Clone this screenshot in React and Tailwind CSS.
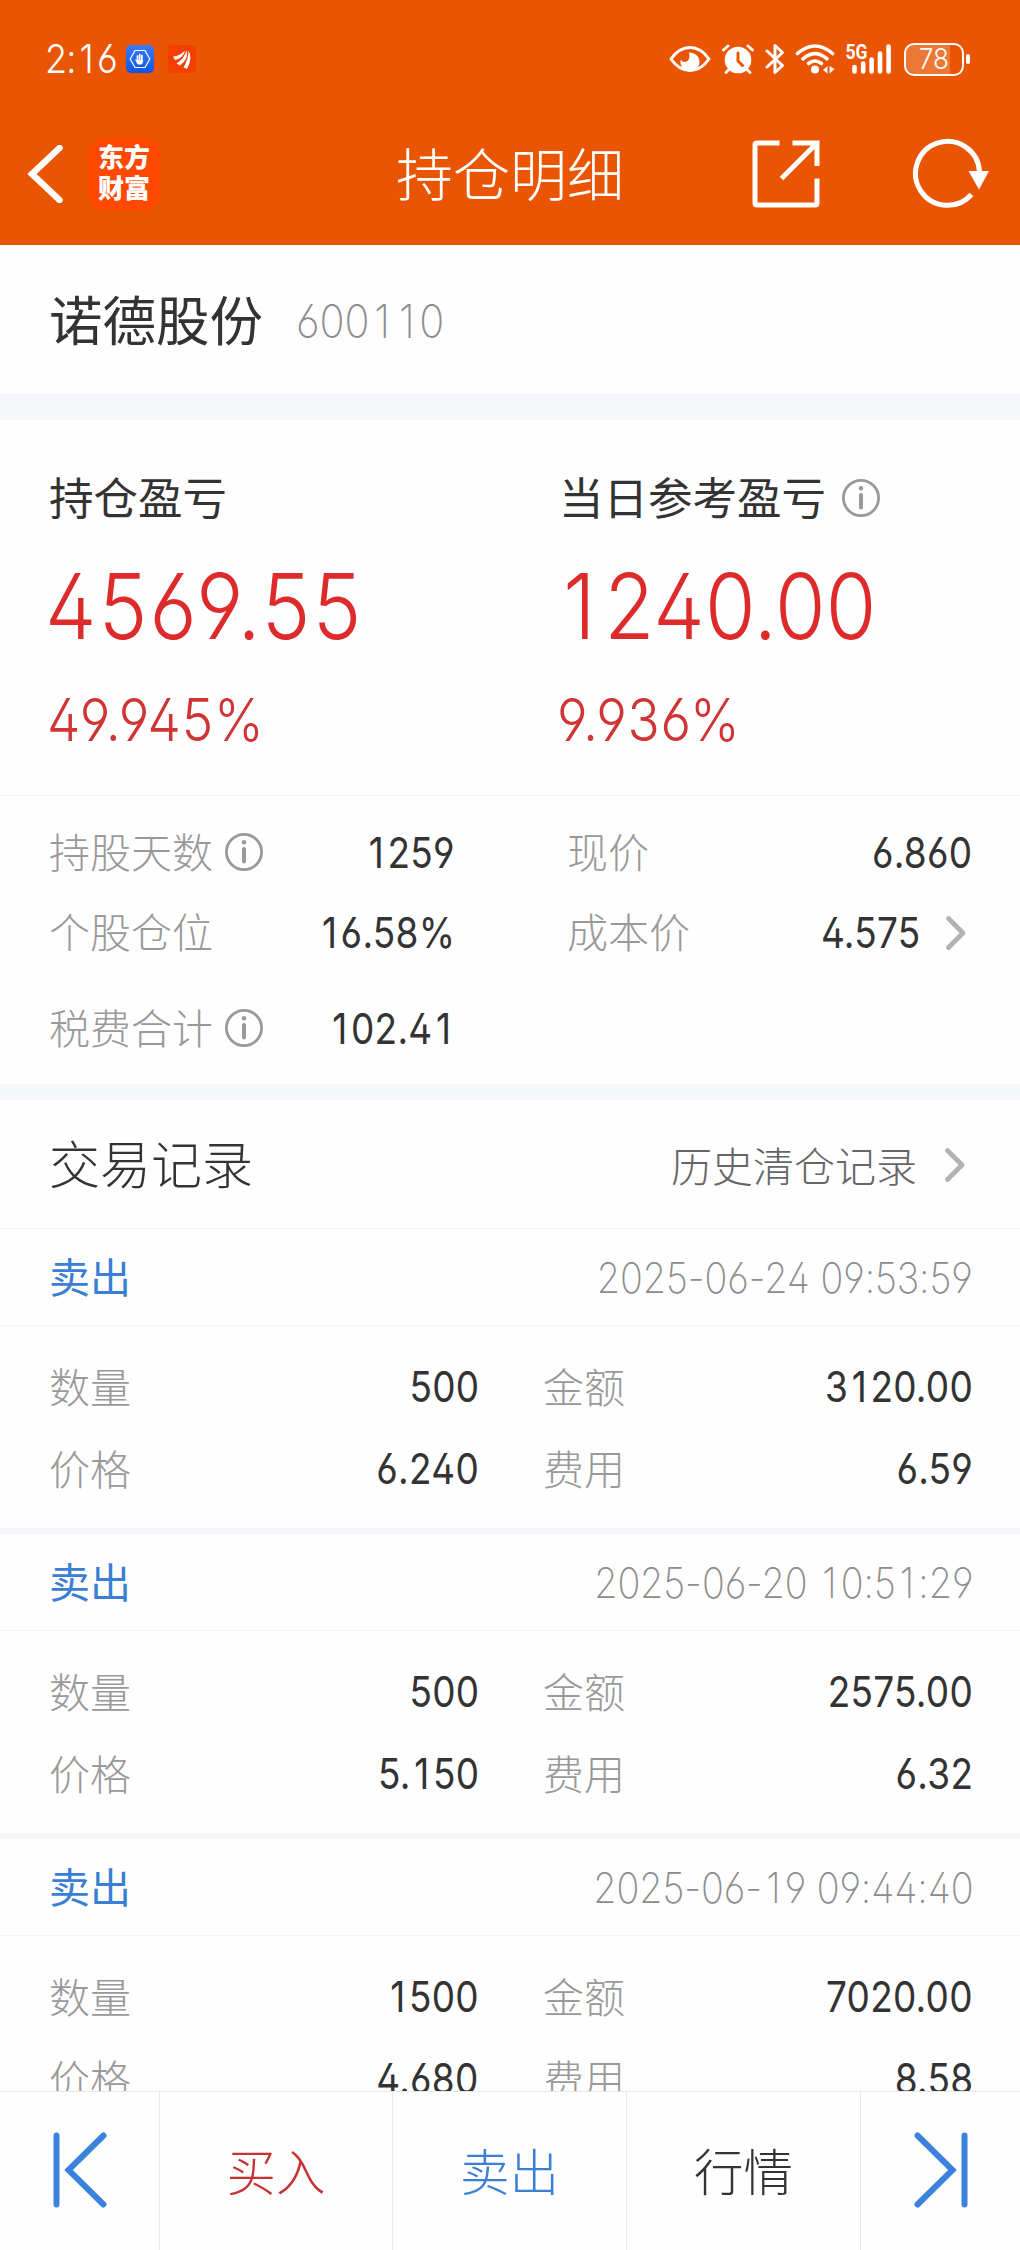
import clsx from "clsx";

const records = [
  { id: 1, type: "卖出", time: "2025-06-24 09:53:59", quantity: "500", amount: "3120.00", price: "6.240", fee: "6.59" },
  { id: 2, type: "卖出", time: "2025-06-20 10:51:29", quantity: "500", amount: "2575.00", price: "5.150", fee: "6.32" },
  { id: 3, type: "卖出", time: "2025-06-19 09:44:40", quantity: "1500", amount: "7020.00", price: "4.680", fee: "8.58" },
];

// Narrow digits with open 4, 6 and 9; the slim "1" gets a full digit cell
const Num = ({ children, thin, className }) => (
  <span
    className={clsx(
      "block whitespace-pre font-['Inter',sans-serif] [font-feature-settings:'cv02','cv03','cv04']",
      thin ? "scale-x-[0.9]" : "scale-x-[0.87]",
      className
    )}
  >
    {children.split(/(1)/).map((part, i) =>
      part === "1" ? (
        <span key={i} className="inline-block w-[0.6em] text-center">{part}</span>
      ) : (
        part
      )
    )}
  </span>
);

const InfoIcon = () => (
  <svg className="size-[38px] shrink-0" viewBox="0 0 38 38" fill="none">
    <circle cx="19" cy="19" r="17.6" stroke="#999999" strokeWidth="2.8" />
    <circle cx="19" cy="9.2" r="2.2" fill="#999999" />
    <path d="M19 16v12.5" stroke="#999999" strokeWidth="4" strokeLinecap="round" />
  </svg>
);

const ChevronIcon = () => (
  <svg className="mt-[2px] h-[36px] w-[22px] shrink-0" viewBox="0 0 22 36" fill="none">
    <path d="M3.500 3.5 18 18 3.500 32.5" stroke="#b2b2b2" strokeWidth="4.8" strokeLinecap="round" strokeLinejoin="round" />
  </svg>
);

const StatusBar = () => (
  <div className="flex h-[102px] items-center justify-between pt-4 pr-[50px] pl-[45px]">
    <div className="flex items-center">
      <div className="flex w-[81px]">
        <Num thin className="origin-left text-[40px] leading-[44px] font-light tracking-[-1px]">2:16</Num>
      </div>
      <svg className="size-7" viewBox="0 0 28 28">
        <defs>
          <linearGradient id="shield" x1="0" y1="0" x2="0" y2="1">
            <stop offset="0" stopColor="#3a7bfa" />
            <stop offset="1" stopColor="#0f55e6" />
          </linearGradient>
        </defs>
        <rect width="28" height="28" rx="5" fill="url(#shield)" />
        <path d="M9 5.5h10l4.8 8.500-4.800 8.500H9L4.200 14z" fill="none" stroke="#fff" strokeWidth="1.2" />
        <path d="M11.500 11v5M13.700 9.500v7M15.900 10.500v6" stroke="#fff" strokeWidth="1.700" strokeLinecap="round" />
        <path d="M9 14.200l2 1h5.700v2.300q0 2-2.200 2h-1.500q-1.500 0-2.300-1.600z" fill="#fff" />
      </svg>
      <svg className="ml-[14px] size-7" viewBox="0 0 28 28">
        <rect width="28" height="28" rx="4" fill="#f43e02" />
        <path d="M5 11.500Q12 11 17 5.500 15.500 13 7 15z" fill="#fff" />
        <path d="M8.500 18.500Q16 14 18.500 5.200 21.500 13 12 20.500z" fill="#fff" />
        <path d="M15.500 22.500Q20.500 14 20.500 5.500 25 13 19 24z" fill="#fff" />
      </svg>
    </div>

    <div className="flex items-center">
      <svg className="h-[28px] w-[42px]" viewBox="0 0 42 28" fill="none">
        <path d="M2 14Q10 2.500 21 2.500T40 14Q32 25.500 21 25.500T2 14z" stroke="#fff" strokeWidth="3" strokeLinejoin="round" />
        <path d="M20 7.500A9.500 9.500 0 1 1 11.800 14.500Q13 17 15.800 17 19.500 16.600 20.300 13 20.600 10 20 7.500z" fill="#fff" />
      </svg>
      <svg className="ml-[11px] h-[30px] w-8" viewBox="0 0 32 30" fill="none" stroke="#fff" strokeLinecap="round">
        <circle cx="16" cy="16" r="13.300" fill="#fff" stroke="none" />
        <path d="M1.500 6 6 2M30.500 6 26 2M7 25.500 4 28.500M25 25.500 28 28.500" strokeWidth="2.800" />
        <path d="M16 9v8l4.500 4.500" stroke="#e95502" strokeWidth="3" strokeLinejoin="round" />
      </svg>
      <svg className="ml-[11px] h-[32px] w-5" viewBox="0 0 20 32" fill="none" stroke="#fff" strokeWidth="3" strokeLinecap="round" strokeLinejoin="round">
        <path d="M2 8 17.500 22.500 10 29.500V2.500L17.500 9.500 2 24" />
      </svg>
      <svg className="ml-[10px] h-[30px] w-10" viewBox="0 0 40 30" fill="none" stroke="#fff" strokeWidth="3.600" strokeLinecap="round">
        <path d="M2.500 9.500Q20-5.500 37.500 9.500" />
        <path d="M8 14.800Q20 4.500 32 14.800" />
        <path d="M13.500 19.500Q20 14.500 26.500 19.500" />
        <circle cx="20" cy="25.500" r="4" fill="#fff" stroke="none" />
        <path d="M32.500 22v7.500L28 26zM34.500 22v7.500L39.500 25z" fill="#fff" stroke="none" />
      </svg>
      <svg className="ml-[11px] h-[30px] w-[46px] overflow-visible" viewBox="0 0 46 30" fill="none" stroke="#fff" strokeWidth="4.600" strokeLinecap="round">
        <text x="-0.500" y="14.500" fill="#fff" stroke="none" fontSize="19.500" fontWeight="700" textLength="22" lengthAdjust="spacingAndGlyphs" fontFamily="Roboto, sans-serif">5G</text>
        <path d="M8.500 23v4.500M17.200 19.500v8M25.600 15.500v12M34 9.500v18M42.600 2.500v25" />
      </svg>
      <div className="relative ml-[12px] flex h-[33px] w-[60px] items-center justify-center rounded-[10px] border-[2.5px] border-white">
        <span className="absolute inset-y-0 left-0 w-[44px] rounded-l-[7px] bg-white/20" />
        <Num thin className="relative text-[29px] leading-[28px] font-light">78</Num>
      </div>
      <span className="ml-[2px] h-[10px] w-1 rounded-full bg-white" />
    </div>
  </div>
);

const NavBar = () => (
  <div className="grid h-[143px] grid-cols-[1fr_auto_1fr] items-center">
    <div className="flex items-center pl-[27px]">
      <svg className="h-[58px] w-[36px]" viewBox="0 0 36 58" fill="none">
        <path d="M32.500 3 5 29 32.500 55" stroke="#fff" strokeWidth="6.500" strokeLinecap="round" />
      </svg>
      <div className="ml-[25px] flex size-[72px] flex-col items-center justify-center rounded-[16px] bg-[#ff4800] pb-[6px] text-[26px] leading-[31px] font-black">
        <span>东方</span>
        <span>财富</span>
      </div>
    </div>
    <h1 className="pb-[5px] text-[57px] leading-[70px] font-light">持仓明细</h1>
    <div className="flex items-center justify-end pr-[31px]">
      <svg className="size-[68px]" viewBox="0 0 68 68" fill="none" stroke="#fff" strokeWidth="5">
        <path d="M27.500 3H5Q3 3 3 5v58q0 2 2 2h58q2 0 2-2V38.500" />
        <path d="M40.500 3H65v23M64 4 29.500 38.500" />
      </svg>
      <svg className="ml-[91px] size-[78px]" viewBox="0 0 78 78" fill="none">
        <path d="M60.500 59.500A32 32 0 1 1 68.500 37" stroke="#fff" strokeWidth="5" />
        <path d="M57.500 36h20.500L68 54.500z" fill="#fff" />
      </svg>
    </div>
  </div>
);

const ProfitCard = ({ title, value, percent, info, className }) => (
  <div className="w-[510px] shrink-0">
    <div className="flex h-[64px] items-center gap-4">
      <span className="text-[44.500px] leading-[60px] text-[#333333]">{title}</span>
      {info && <span className="pt-1"><InfoIcon /></span>}
    </div>
    <p className={clsx("mt-[23px] -ml-1 flex h-[110px] text-[91px] leading-[110px] font-light text-[#dd2b2b]", className)}>
      <Num thin className="origin-left">{value}</Num>
    </p>
    <p className="mt-[21px] -ml-[2px] flex h-[76px] text-[59px] leading-[76px] font-light tracking-[0.9px] text-[#d03434]">
      <Num thin className="origin-left">{percent}</Num>
    </p>
  </div>
);

const Stat = ({ label, value, info, arrow }) => (
  <div className="flex h-20 items-center">
    <span className="pb-[4px] text-[41px] leading-[56px] font-light text-[#999999]">{label}</span>
    {info && <span className="ml-[12px]"><InfoIcon /></span>}
    <Num className="ml-auto origin-right pt-[2px] text-[42.500px] leading-[56px] tracking-[0.3px] text-[#333333]">{value}</Num>
    {arrow && <span className="mr-[5px] ml-[25px]"><ChevronIcon /></span>}
  </div>
);

const RecordField = ({ label, value }) => (
  <div className="flex h-[82px] items-center justify-between">
    <span className="pb-[4px] text-[41px] leading-[56px] font-light text-[#999999]">{label}</span>
    <Num className="-mr-[2px] origin-right text-[42.500px] leading-[56px] tracking-[0.3px] text-[#333333]">{value}</Num>
  </div>
);

const Record = ({ record }) => (
  <li className="border-b-[6px] border-[#f6f7fa]">
    <div className="flex h-[97px] items-center justify-between border-b border-[#f4f4f4] px-[49px]">
      <span className="pb-[4px] text-[41px] leading-[56px] text-[#3b7fd4]">{record.type}</span>
      <time className="-mr-[2px] flex pt-[2px] text-[42px] leading-[56px] font-extralight tracking-[-0.1px] text-[#8c8c8c]">
        <Num thin className="origin-right">{record.time}</Num>
      </time>
    </div>
    <div className="grid grid-cols-2 gap-x-[66px] px-[49px] pt-5 pb-[18px]">
      <RecordField label="数量" value={record.quantity} />
      <RecordField label="金额" value={record.amount} />
      <RecordField label="价格" value={record.price} />
      <RecordField label="费用" value={record.fee} />
    </div>
  </li>
);

const FooterButton = ({ children, className }) => (
  <button className={clsx("flex items-center justify-center border-r border-[#e8e8e8] pb-[3px] text-[49.500px] leading-[60px] font-light", className)}>
    {children}
  </button>
);

const App = () => {
  return (
    <div className="flex h-[2250px] w-[1020px] flex-col overflow-hidden bg-[#fefefe] font-['Noto_Sans_CJK_SC',sans-serif]">
      <header className="h-[245px] shrink-0 bg-[#e95502] text-white">
        <StatusBar />
        <NavBar />
      </header>

      <main className="min-h-0 flex-1 overflow-hidden">
        <section className="flex h-[149px] items-center px-[49px]">
          <h2 className="pb-[4px] text-[53.500px] leading-[70px] text-[#333333]">诺德股份</h2>
          <Num thin className="ml-[33px] origin-left pt-[2px] text-[46px] leading-[60px] font-extralight text-[#8c8c8c]">600110</Num>
        </section>
        <div className="h-[26px] bg-[#f6f7fa]" />

        {/* 盈亏 */}
        <section className="flex h-[376px] border-b border-[#f4f4f4] pt-[44px] pl-[49px]">
          <ProfitCard title="持仓盈亏" value="4569.55" percent="49.945%" className="tracking-[2.5px]" />
          <ProfitCard title="当日参考盈亏" value="1240.00" percent="9.936%" info className="tracking-[0.2px]" />
        </section>

        {/* 持仓数据 */}
        <section className="grid grid-cols-[406px_405px] gap-x-[112px] px-[49px] py-4">
          <Stat label="持股天数" value="1259" info />
          <Stat label="现价" value="6.860" />
          <Stat label="个股仓位" value="16.58%" />
          <Stat label="成本价" value="4.575" arrow />
          <div className="mt-4">
            <Stat label="税费合计" value="102.41" info />
          </div>
        </section>
        <div className="h-4 bg-[#f6f7fa]" />

        {/* 交易记录 */}
        <section>
          <div className="flex h-[129px] items-center justify-between border-b border-[#f4f4f4] pr-[54px] pl-[49px]">
            <h3 className="pb-[4px] text-[51px] leading-[70px] font-light text-[#333333]">交易记录</h3>
            <div className="flex items-center gap-[27px]">
              <span className="pb-[1px] text-[41px] leading-[60px] font-light text-[#666666]">历史清仓记录</span>
              <ChevronIcon />
            </div>
          </div>
          <ul>
            {records.map((record) => (
              <Record key={record.id} record={record} />
            ))}
          </ul>
        </section>
      </main>

      <footer className="grid h-[159px] shrink-0 grid-cols-[160px_233px_234px_234px_159px] border-t border-[#e8e8e8]">
        <FooterButton>
          <svg className="h-[76px] w-[54px]" viewBox="0 0 54 76" fill="none" stroke="#3b82dc" strokeWidth="6" strokeLinecap="round">
            <path d="M3.500 3.500v69M50.500 3.500 15.500 38 50.500 72.500" />
          </svg>
        </FooterButton>
        <FooterButton className="text-[#c83232]">买入</FooterButton>
        <FooterButton className="text-[#3b7fd4]">卖出</FooterButton>
        <FooterButton className="text-[#333333]">行情</FooterButton>
        <FooterButton className="border-r-0">
          <svg className="h-[76px] w-[54px]" viewBox="0 0 54 76" fill="none" stroke="#3b82dc" strokeWidth="6" strokeLinecap="round">
            <path d="M50.500 3.500v69M3.500 3.500 38.500 38 3.500 72.500" />
          </svg>
        </FooterButton>
      </footer>
    </div>
  );
};

export default App;
